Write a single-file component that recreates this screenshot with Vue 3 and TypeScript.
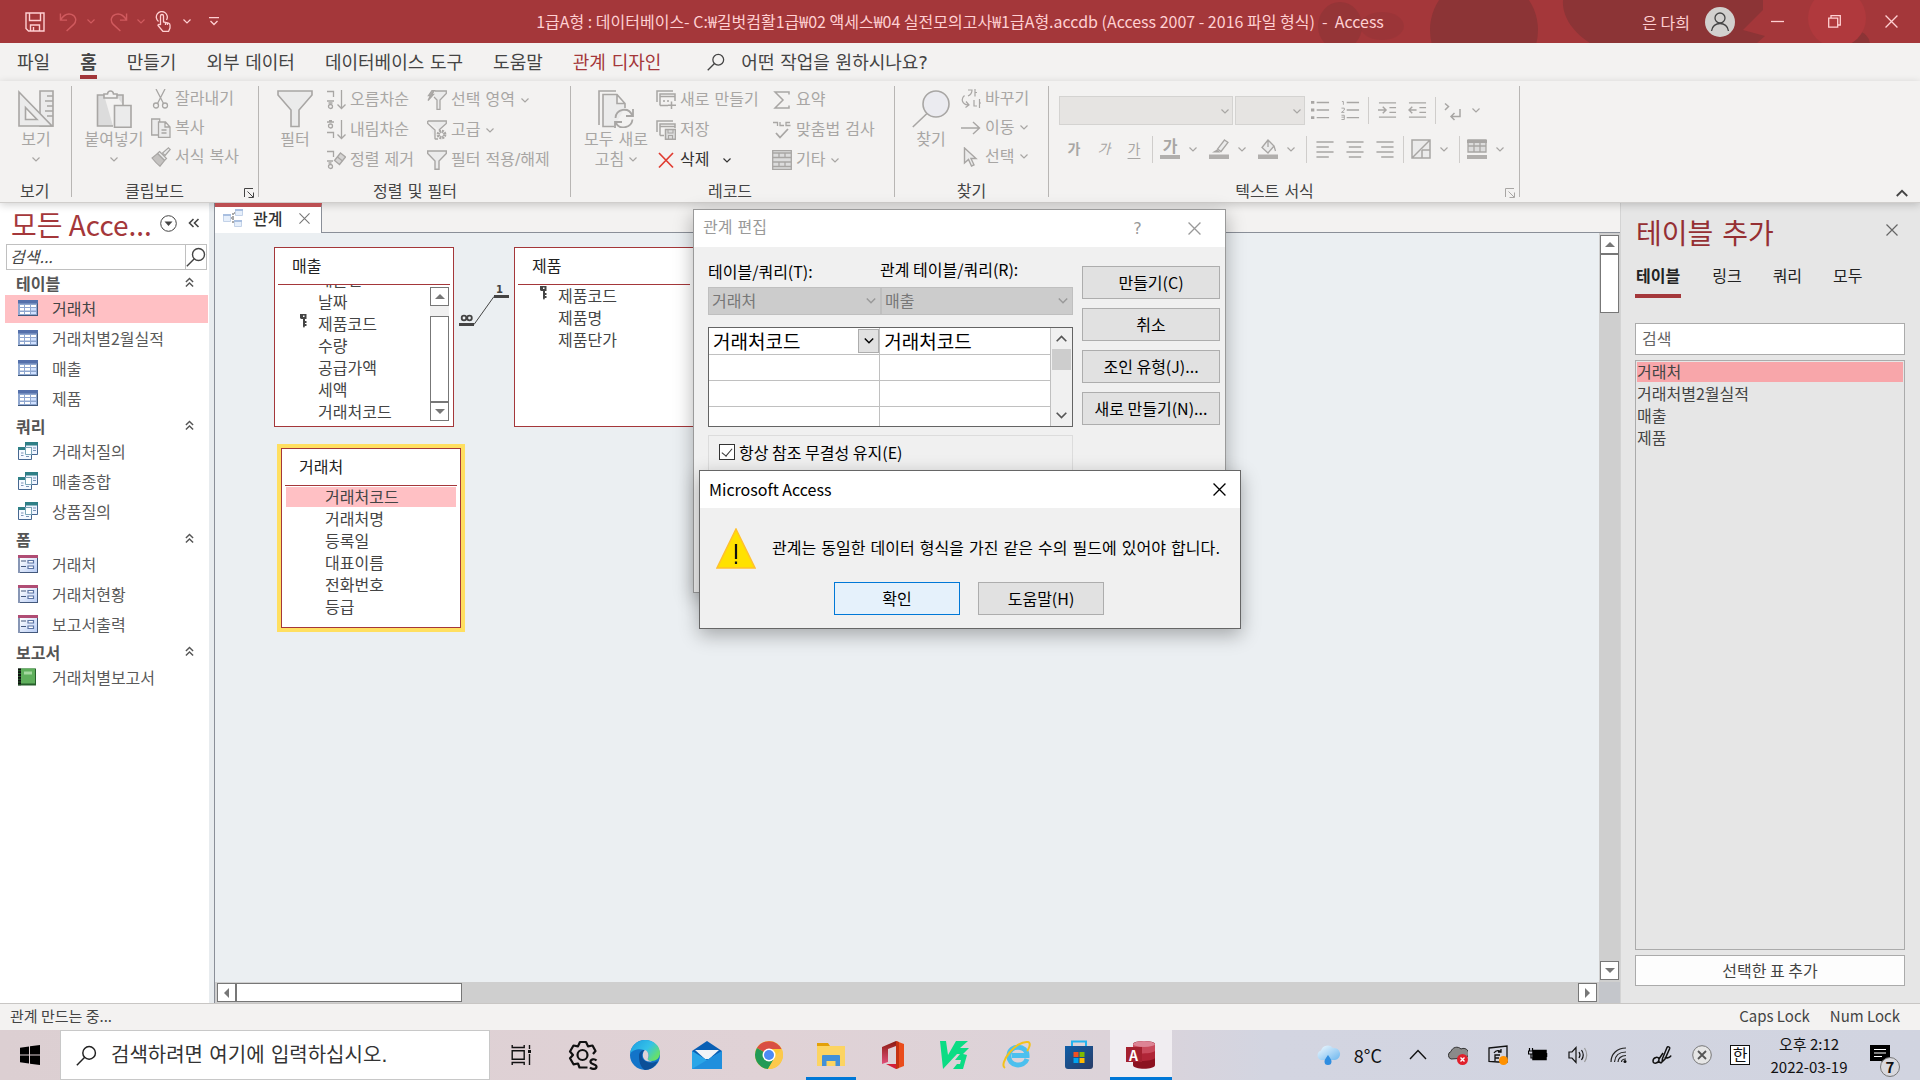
<script setup lang="ts">
import { ref } from 'vue'

interface NavGroup {
  title: string
  icon: string
  items: string[]
}

interface Cmd {
  label: string
  icon: string
  drop?: boolean
  live?: boolean
}

const ribbonTabs = ['파일', '홈', '만들기', '외부 데이터', '데이터베이스 도구', '도움말', '관계 디자인']

const clipboardCmds: Cmd[] = [
  { label: '잘라내기', icon: 'cut' },
  { label: '복사', icon: 'copy' },
  { label: '서식 복사', icon: 'brush' },
]
const sortCmds: Cmd[] = [
  { label: '오름차순', icon: 'asc' },
  { label: '내림차순', icon: 'desc' },
  { label: '정렬 제거', icon: 'unsort' },
]
const filterCmds: Cmd[] = [
  { label: '선택 영역', icon: 'filter-bolt', drop: true },
  { label: '고급', icon: 'filter-gear', drop: true },
  { label: '필터 적용/해제', icon: 'filter-small' },
]
const recordCmds: Cmd[] = [
  { label: '새로 만들기', icon: 'rec-new' },
  { label: '저장', icon: 'rec-save' },
  { label: '삭제', icon: 'rec-delete', drop: true, live: true },
]
const totalCmds: Cmd[] = [
  { label: '요약', icon: 'sigma' },
  { label: '맞춤법 검사', icon: 'spell' },
  { label: '기타', icon: 'more', drop: true },
]
const findCmds: Cmd[] = [
  { label: '바꾸기', icon: 'replace' },
  { label: '이동', icon: 'goto', drop: true },
  { label: '선택', icon: 'cursor', drop: true },
]

const navGroups: NavGroup[] = [
  { title: '테이블', icon: 'nav-table', items: ['거래처', '거래처별2월실적', '매출', '제품'] },
  { title: '쿼리', icon: 'nav-query', items: ['거래처질의', '매출종합', '상품질의'] },
  { title: '폼', icon: 'nav-form', items: ['거래처', '거래처현황', '보고서출력'] },
  { title: '보고서', icon: 'nav-report', items: ['거래처별보고서'] },
]

const salesFields = ['매출번', '날짜', '제품코드', '수량', '공급가액', '세액', '거래처코드']
const productFields = ['제품코드', '제품명', '제품단가']
const clientFields = ['거래처코드', '거래처명', '등록일', '대표이름', '전화번호', '등급']

const addTabs = ['테이블', '링크', '쿼리', '모두']
const addTables = ['거래처', '거래처별2월실적', '매출', '제품']

const enforceIntegrity = ref(true)

const taskApps = ['edge', 'mail', 'chrome', 'explorer', 'office', 'v3', 'ie', 'store', 'access']
const trayIcons = ['chev-up', 'cloud-off', 'sync', 'battery', 'sound', 'wifi', 'pen', 'cancel']
</script>

<template>
  <div class="app">
    <svg class="sprite" aria-hidden="true">
      <defs>
        <linearGradient id="g-edge" x1="0" y1="0" x2="1" y2="0.6"><stop offset="0" stop-color="#1b9de2" /><stop offset="0.6" stop-color="#35c1e8" /><stop offset="1" stop-color="#66e06a" /></linearGradient>
        <linearGradient id="g-form" x1="0" y1="0" x2="1" y2="1"><stop offset="0" stop-color="#fff" /><stop offset="1" stop-color="#b9cdf5" /></linearGradient>
        <linearGradient id="g-off" x1="0" y1="0" x2="0" y2="1"><stop offset="0" stop-color="#8b1a10" /><stop offset="1" stop-color="#e0507a" /></linearGradient>
        <linearGradient id="g-store" x1="0" y1="0" x2="1" y2="1"><stop offset="0" stop-color="#0f5ea8" /><stop offset="1" stop-color="#2a3c66" /></linearGradient>
        <linearGradient id="g-cloud" x1="0" y1="0" x2="1" y2="1"><stop offset="0" stop-color="#f4fbff" /><stop offset="1" stop-color="#6cb6ee" /></linearGradient>
      </defs>
      <symbol id="chev" viewBox="0 0 8 5"><path d="M.5.5 4 4 7.5.5" fill="none" stroke="currentColor" stroke-width="1.2" /></symbol>
      <symbol id="x" viewBox="0 0 12 12"><path d="M.5.5l11 11M11.5.5l-11 11" fill="none" stroke="currentColor" stroke-width="1.2" /></symbol>
      <symbol id="lens" viewBox="0 0 20 20"><g fill="none" stroke="currentColor" stroke-width="1.4"><circle cx="12.5" cy="7.5" r="6" /><path d="M8.3 11.7.8 19.2" /></g></symbol>
      <symbol id="dbl" viewBox="0 0 10 12"><path d="M1 5.5l4-4 4 4M1 10.5l4-4 4 4" fill="none" stroke="currentColor" stroke-width="1.6" /></symbol>
      <symbol id="launch" viewBox="0 0 10 10"><path d="M.5 9V.5H9M3.5 3.5 9 9M9.500 4.500v5h-5" fill="none" stroke="currentColor" /></symbol>
      <symbol id="save" viewBox="0 0 20 20"><g fill="none" stroke="currentColor" stroke-width="1.4"><path d="M1 1h18v18H3.500L1 16.500z" /><path d="M4.500 1v7.500h11V1M5.500 19v-6h9v6M8.500 15v4" /></g></symbol>
      <symbol id="undo" viewBox="0 0 20 20"><path d="M1.500 1v7h7M1.500 8C5 2.500 9 .8 13 2c5 1.500 6 7 2.500 10.500L8 19.500" fill="none" stroke="currentColor" stroke-width="1.5" /></symbol>
      <symbol id="touch" viewBox="0 0 16 21"><g fill="none" stroke="currentColor" stroke-width="1.300"><path d="M3.500 10.500A5.500 5.500 0 1 1 11.500 9" /><path d="M5.500 14V5a1.500 1.500 0 0 1 3 0v6l5 1.200c1.200.3 1.500 1 1.500 2V17l-1.500 3.500H8L3 14.500c0-1.500 1.500-1.500 2.500-.5M10.500 11.500V14M12.500 12v2" /></g></symbol>
      <symbol id="custom" viewBox="0 0 10 9"><path d="M0 .7h10M1.500 4 5 7.500 8.500 4" fill="none" stroke="currentColor" stroke-width="1.300" /></symbol>

      <symbol id="b-view" viewBox="0 0 36 38"><g fill="#ebebeb" stroke="currentColor" stroke-width="1.600"><path d="M22 1h13v35H22zM29 6h6M27 11h8M29 16h6M27 21h8M29 26h6" /><path d="M1 2l33 34H1zM7.500 17.500 19 29.500H7.500z" fill-rule="evenodd" /></g></symbol>
      <symbol id="b-paste" viewBox="0 0 36 38"><g stroke="currentColor" stroke-width="1.600" fill="none"><path d="M8 5H1.500v31H17M20 5h7v10" fill="#dcdcdc" /><path d="M8 8V4h3.500c.5-4 5.500-4 6 0H21v4z" fill="#f3f2f1" /><path d="M18.500 15.500H35V37.200H18.500z" fill="#ebebeb" /></g></symbol>
      <symbol id="b-filter" viewBox="0 0 36 38"><path d="M1 1h34v4L22 20v16.500h-8V20L1 5z" fill="#ebebeb" stroke="currentColor" stroke-width="1.600" /></symbol>
      <symbol id="b-refresh" viewBox="0 0 36 38"><g stroke="currentColor" stroke-width="1.600" fill="none"><path d="M18 1H1v34" /><path d="M16 36.500H5V4.500h14l8 9V18M19 4.500v9h8" fill="#ebebeb" /><path d="M17.500 28c.5-9 13-11.500 16.500-3M35 19v7h-7M34.500 29.500c-1 8.500-13 11-16.500 3.500M17 38v-6h7" stroke-width="1.800" /></g></symbol>
      <symbol id="b-find" viewBox="0 0 38 38"><g stroke="currentColor" stroke-width="1.600" fill="#ebebf0"><circle cx="24" cy="14" r="13" /><path d="M15 23.500.8 37" /></g></symbol>

      <symbol id="cut" viewBox="0 0 20 20"><g fill="none" stroke="currentColor" stroke-width="1.300"><path d="M5 0l7.500 14.500M14 0 6.500 14.500" /><circle cx="5" cy="16.500" r="2.500" /><circle cx="14" cy="16.500" r="2.500" /></g></symbol>
      <symbol id="copy" viewBox="0 0 20 20"><g fill="#ebebeb" stroke="currentColor" stroke-width="1.300"><path d="M.7 1h8v16h-8z" /><path d="M7.500 4h7l4.500 5v10.300H7.500zM14 4v5h5M10.500 12h5M10.500 15h5" /></g></symbol>
      <symbol id="brush" viewBox="0 0 20 20"><g stroke="currentColor" stroke-width="1.200" fill="#ebebeb"><path d="M17.500.8 19.200 2.500 14 8.500 11.500 6z" /><path d="M8.500 4.500l7 7-2 2-7-7z" /><path d="M6.500 6.500l7 7-4.500 5.700C6 17 3 13.500 1 11z" fill="#c4c2c0" /></g></symbol>
      <symbol id="asc" viewBox="0 0 20 20"><g fill="none" stroke="currentColor" stroke-width="1.300"><path d="M1 1.500h6.500V7M1 11h7M2.500 13h4" /><circle cx="4.500" cy="16.500" r="2" /><path d="M15.500 0v18.500M11.500 14.500l4 4 4-4" /></g></symbol>
      <symbol id="desc" viewBox="0 0 20 20"><g fill="none" stroke="currentColor" stroke-width="1.300"><path d="M1 2h7M3 .5h3M1 12.500h6.500V18" /><circle cx="4.500" cy="6" r="2" /><path d="M15.500 0v18.500M11.500 14.500l4 4 4-4" /></g></symbol>
      <symbol id="unsort" viewBox="0 0 20 20"><g fill="none" stroke="currentColor" stroke-width="1.300"><path d="M1 1.500h6.500V7M1 11h6M2.500 13h3" /><circle cx="4.500" cy="16.500" r="2" /><path d="M14.500 3l5 4-6 7.500-5-4z" fill="#d5d4d3" /><path d="M11.500 7l5 4" /></g></symbol>
      <symbol id="filter-bolt" viewBox="0 0 20 20"><g stroke="currentColor" stroke-width="1.300"><path d="M8 1h11.300v2.500L13 10v9.300h-3V10L7 7" fill="#ebebeb" /><path d="M5 .5 1.500 5.500h2L1 10.500l5.500-6h-2L7.500.5z" fill="#b1afad" /></g></symbol>
      <symbol id="filter-gear" viewBox="0 0 20 20"><path d="M.7 1h18.600v2.500L12 10M8 19.300V10L.7 3.500V1M8 19h3" fill="#ebebeb" stroke="currentColor" stroke-width="1.300" /><circle cx="14.500" cy="14.500" r="3.700" fill="none" stroke="currentColor" stroke-width="2.400" stroke-dasharray="2 .9" /><circle cx="14.500" cy="14.500" r="2.200" fill="none" stroke="currentColor" /></symbol>
      <symbol id="filter-small" viewBox="0 0 20 20"><path d="M.7 1h18.600v2.500L12 11v8.300H8V11L.7 3.500z" fill="#ebebeb" stroke="currentColor" stroke-width="1.400" /></symbol>
      <symbol id="rec-new" viewBox="0 0 20 20"><g fill="none" stroke="currentColor" stroke-width="1.500"><path d="M1 12V1h16M4 15.500V4h15v7M4 6.500h15M4 15.500h8M7 11h2M11 11h2M15.500 11.500V19M12 15.300h8" /></g></symbol>
      <symbol id="rec-save" viewBox="0 0 20 20"><g fill="none" stroke="currentColor" stroke-width="1.500"><path d="M1 12V1h16M4 15.500V4h15v4M4 6.500h15M4 15.500h4" /><path d="M9.500 9.500h10v9.700h-10z" fill="#dcdcdc" /><path d="M12 9.500v3.500h5V9.500M12.500 19v-3.500h4V19" stroke-width="1.100" /></g></symbol>
      <symbol id="rec-delete" viewBox="0 0 20 20"><path d="M3 3l14 14.500M17 3 3 17.500" fill="none" stroke="#e03c31" stroke-width="1.700" /></symbol>
      <symbol id="sigma" viewBox="0 0 20 20"><path d="M17 4.500V2H3l8 8-8 8h14v-2.500" fill="none" stroke="currentColor" stroke-width="1.500" /></symbol>
      <symbol id="spell" viewBox="0 0 20 20"><g fill="none" stroke="currentColor" stroke-width="1.300"><path d="M1 2.500h4.500V6M8 2v3.500h4M18 2.500h-4v3h4.500" /><path d="M4 13l4 4.500 8-8.500" stroke-width="1.800" /></g></symbol>
      <symbol id="more" viewBox="0 0 20 20"><g fill="#dcdcdc" stroke="currentColor" stroke-width="1.300"><path d="M.7.7h18.600v18.600H.7z" /><path d="M.7 3h18.600M.7 7.500h18.600M.7 12h18.600M.7 16.500h18.600M7 3v4.500M13 3v4.500M7 12v4.500M13 12v4.500" /></g></symbol>
      <symbol id="replace" viewBox="0 0 20 20"><g fill="none" stroke="currentColor" stroke-width="1.200"><path d="M7 1h4c0 3-1.500 5-4 6M14 0v7.500M14 3.500h2M13 11v6h3M18.500 10v9M18.500 14h1.500" /><path d="M3.500 6.500C-.5 10 1 15 7 16M5 12.500l3 3.500-3.500 2.500" /></g></symbol>
      <symbol id="goto" viewBox="0 0 20 20"><path d="M0 10h18M12 4l6.500 6-6.500 6" fill="none" stroke="currentColor" stroke-width="1.400" /></symbol>
      <symbol id="cursor" viewBox="0 0 20 20"><path d="M3.500 1v15l4-3.500 3 6.500 2.500-1.200-3-6.300H15z" fill="#ebebeb" stroke="currentColor" stroke-width="1.400" /></symbol>

      <symbol id="bullets" viewBox="0 0 20 20"><path d="M0 1.500h3.500M0 9.500h3.500M0 17.500h3.500" stroke="currentColor" stroke-width="3" /><path d="M6 1.500h13M6 9.500h13M6 17.500h13" stroke="currentColor" stroke-width="1.500" /></symbol>
      <symbol id="numbers" viewBox="0 0 20 20"><path d="M1 .5h1.500V4M.5 7.500h3v2l-3 2.500h3M.5 15h3v4.500h-3M.5 17h3" fill="none" stroke="currentColor" /><path d="M6 1.500h13M6 9.500h13M6 17.500h13" stroke="currentColor" stroke-width="1.500" /></symbol>
      <symbol id="indent" viewBox="0 0 20 20"><path d="M1 2h18M12 7h7M12 12h7M1 17h18M0 9.500h8M5 6l3.500 3.500L5 13" fill="none" stroke="currentColor" stroke-width="1.500" /></symbol>
      <symbol id="outdent" viewBox="0 0 20 20"><path d="M1 2h18M12 7h7M12 12h7M1 17h18M1 9.500h8M4.500 6 1 9.500 4.500 13" fill="none" stroke="currentColor" stroke-width="1.500" /></symbol>
      <symbol id="rtl" viewBox="0 0 20 20"><path d="M2 2.500l3.500 3L2 9M17 8v7.500H8M11.500 12 8 15.500l3.500 3.500" fill="none" stroke="currentColor" stroke-width="1.500" /></symbol>
      <symbol id="hilite" viewBox="0 0 20 20"><path d="M15.500 1 19 3.500l-7 9-3.500-2.500z" fill="#ebebeb" stroke="currentColor" stroke-width="1.300" /><path d="M8 10.500l3.500 3H3z" fill="currentColor" /><path d="M0 15.500h20V20H0z" fill="#b1afad" /></symbol>
      <symbol id="bucket" viewBox="0 0 20 20"><path d="M10 1 4 8.500l6 5.500 6-7zM10 1v7M16 7l1.500 5" fill="#ebebeb" stroke="currentColor" stroke-width="1.300" /><path d="M0 15.500h20V20H0z" fill="#b1afad" /></symbol>
      <symbol id="al-l" viewBox="0 0 20 20"><path d="M1 2h18M1 7.300h13M1 12.600h18M1 18h13" stroke="currentColor" stroke-width="1.600" /></symbol>
      <symbol id="al-c" viewBox="0 0 20 20"><path d="M1 2h18M3.500 7.300h13M1 12.600h18M3.500 18h13" stroke="currentColor" stroke-width="1.600" /></symbol>
      <symbol id="al-r" viewBox="0 0 20 20"><path d="M1 2h18M6 7.300h13M1 12.600h18M6 18h13" stroke="currentColor" stroke-width="1.600" /></symbol>
      <symbol id="altrow" viewBox="0 0 20 20"><path d="M1 1h18v18H1zM1 19 19 1M11 11v8M11 11h8" fill="#ebebeb" stroke="currentColor" stroke-width="1.500" /></symbol>
      <symbol id="gridlines" viewBox="0 0 20 20"><path d="M1 1h18v12H1zM7 1v12M13 1v12M1 7h18" fill="#dcdcdc" stroke="currentColor" stroke-width="1.300" /><path d="M0 1h20v3H0z" fill="currentColor" /><path d="M0 16h20v4H0z" fill="#b1afad" /></symbol>

      <symbol id="nav-table" viewBox="0 0 20 16"><path d="M0 0h20v16H0z" fill="#41597d" /><path d="M0 0h19v15H0z" fill="#8ea6cf" /><path d="M0 0h20v3.500H0z" fill="#5470ab" /><path d="M2 5h4v2H2zM7 5h5v2H7zM13 5h5v2h-5zM2 8h4v2.500H2zM7 8h5v2.500H7zM2 12h4v2H2zM7 12h5v2H7z" fill="#fff" /><path d="M13 8h5v2.500h-5zM13 12h5v2h-5z" fill="#cfe0ff" /></symbol>
      <symbol id="nav-query" viewBox="0 0 20 18"><path d="M7.500.5h12v12h-12z" fill="#eef4ff" stroke="#466791" /><path d="M7 0h13v3.500H7z" fill="#2e7f86" /><path d="M15 6h3M15 8.500h3" stroke="#7b92b5" /><path d="M.5 5.500h13v12H.5z" fill="#f4f8ff" stroke="#466791" /><path d="M0 5h7v3H0z" fill="#2e7f86" /><path d="M7.500 5.500h6v7h-6z" fill="#fff" stroke="#7aa6b8" /><path d="M3 11h2.500M3 13.500h2.500M8 14.500h3" stroke="#7b92b5" /></symbol>
      <symbol id="nav-form" viewBox="0 0 20 18"><path d="M0 0h20v18H0z" fill="#43587c" /><path d="M0 0h2v18H0z" fill="#8796b5" /><path d="M2 3h17v14H2z" fill="url(#g-form)" /><path d="M0 0h20v3H0z" fill="#b04d74" /><path d="M3 6h5M3 11.500h5" stroke="#44587c" stroke-width="1.200" /><path d="M10 5.500h5.500v2.500H10zM10 11h5.500v2.500H10z" fill="#fff" stroke="#5c74a4" stroke-width="1.200" /></symbol>
      <symbol id="nav-report" viewBox="0 0 20 17"><path d="M0 0h18v17H0z" fill="#275f2c" /><path d="M3 0h14v15H3z" fill="#5faf5c" /><path d="M6 3h8v3H6z" fill="#a5d8a0" /><path d="M1.500 0v17" stroke="#111" stroke-width="3" stroke-dasharray="1.800 1" /></symbol>
      <symbol id="rel-tab" viewBox="0 0 20 19"><path d="M7 9h3V4h3M10 9v5h2" fill="none" stroke="#555" stroke-dasharray="2 1" /><g stroke="#c3d2e8"><path d="M.5 5.500h7v7h-7zM12.500.5h7v6h-7zM11.500 11.500h7v6h-7z" fill="#e6effb" /></g><path d="M0 5h8v2H0zM12 0h8v2h-8zM11 11h8v2h-8z" fill="#a9bfe0" /></symbol>
      <symbol id="key" viewBox="0 0 7 14"><path d="M0 0h6.500v5H5v2h1.500v2H5v1h1.500v2H5L4 14 3 12.500V5H1L0 4z" fill="#444" /><path d="M3 1.500h1.500V3H3z" fill="#fff" /></symbol>

      <symbol id="win" viewBox="0 0 20 20"><path d="M0 2.800 9 1.500V9.500H0zM10 1.300 20 0v9.500H10zM0 10.500h9v8L0 17.200zM10 10.500h10V20l-10-1.300z" fill="#000" /></symbol>
      <symbol id="taskview" viewBox="0 0 20 20"><path d="M.7 0v2.500h12V0M.7 5.700h12v8.500H.7zM.7 20v-2.500h12V20M18 0v4M18 9v11" fill="none" stroke="#111" stroke-width="1.400" /><path d="M16.500 5h3v3h-3z" fill="#111" /></symbol>
      <symbol id="gear-s" viewBox="0 0 30 30"><g fill="none" stroke="#111" stroke-width="2.200"><path d="M19.500 27.500h-8l-1.500-4-4.500.8-3.500-6L5 15l-3-3.500L5.500 5.500l4.500.8L12 2h6l2 4.300 4.500-.8 3 5.500-2.500 3" stroke-linejoin="round" /><circle cx="14.500" cy="15" r="5" /></g><path d="M28.500 20.500c-2-2.200-6-1.300-6 1.200 0 3 6 2 6 5 0 2.500-4.500 3-6.500.8" fill="none" stroke="#111" stroke-width="2.200" /></symbol>
      <symbol id="edge" viewBox="0 0 30 30"><circle cx="15" cy="15" r="15" fill="#1374c9" /><path d="M0 14C1 5 8 0 15 0c9 0 15 6 15 13 0 5-4 8-8 8-3 0-5-1-4-3 2-3 0-7-4-8C9 8 2 10 0 14z" fill="url(#g-edge)" /><path d="M9 16c0-4 3-6.500 6-6-3 2-4 6-2 9 3 4 9 5 15 2-3 6-8 9-13 9-5-3-6-9-6-14z" fill="#0c4f98" /><path d="M15 10c3 1 4.500 5 3 8-1 2 1 3 4 3-3 1.500-8 0-9-4-.7-3 .5-6 2-7z" fill="#e0d3d7" /></symbol>
      <symbol id="mail" viewBox="0 0 30 30"><path d="M0 11 15 1l15 10v18H0z" fill="#0a5fb4" /><path d="M3 10h24l-10 9h-4z" fill="#f2f4f7" /><path d="M0 11l15 9 15-9v18H0z" fill="#2ba6e8" /><path d="M0 29 30 11v18z" fill="#1c86d8" opacity=".7" /></symbol>
      <symbol id="chrome" viewBox="0 0 30 30"><circle cx="15" cy="15" r="14" fill="#fcc934" /><path d="M15 15 2.900 8A14 14 0 0 1 27.500 9H15z" fill="#d94f43" /><path d="M15 15 2.900 8A14 14 0 0 0 14 29l6.500-11z" fill="#229a56" /><path d="M27.500 9A14 14 0 0 1 14 29l7-12z" fill="#fcc94c" /><circle cx="15" cy="15" r="6.500" fill="#fff" /><circle cx="15" cy="15" r="5" fill="#4c8bf5" /></symbol>
      <symbol id="explorer" viewBox="0 0 30 30"><path d="M1 3h11l2 3v5H1z" fill="#e3a008" /><path d="M1 6h28v20H1z" fill="#fcd462" /><path d="M6 26V16q0-1 1-1h16q1 0 1 1v10h-4.500v-5h-9v5z" fill="#4290d8" /></symbol>
      <symbol id="office" viewBox="0 0 30 30"><path d="M18 1v5l-8 3v13l-6 2V7z" fill="url(#g-off)" /><path d="M18 1l8 3v22l-8 3z" fill="#ea4c1c" /><path d="M8 24h10v5z" fill="#d41f3a" /><path d="M18 1l3 1v26l-3 1z" fill="#c43212" /></symbol>
      <symbol id="v3" viewBox="0 0 30 30"><path d="M0 1h6l2 14L16 1h12l-8 7h9l-6 6 4 1-4 14H13l4-5h3l1-4h-6l5-6h-3L3 29z" fill="#0bdc84" /></symbol>
      <symbol id="ie" viewBox="0 0 30 30"><g fill="none"><path d="M25 19c-3 9-19 8-18-4C8 4 25 5 25 15.500H10" stroke="#4cc0ee" stroke-width="5" /><path d="M3 28C-4 24 14 0 26 2c4 1 0 8-1 9" stroke="#f3c21b" stroke-width="2" /></g></symbol>
      <symbol id="store" viewBox="0 0 30 30"><path d="M8 8V1.500h14V8" fill="none" stroke="#23b3ef" stroke-width="2" /><path d="M1 6h28v20q0 3-3 3H4q-3 0-3-3z" fill="url(#g-store)" /><path d="M9.500 12h5v5h-5z" fill="#f25022" /><path d="M15.500 12h5v5h-5z" fill="#7fba00" /><path d="M9.500 18h5v5h-5z" fill="#00a4ef" /><path d="M15.500 18h5v5h-5z" fill="#ffb900" /></symbol>
      <symbol id="access" viewBox="0 0 30 30"><path d="M7 4c0-4 22-4 22 0v21c0 5-22 5-22 0z" fill="#8c1220" /><path d="M7 4h22v14c-2 3-16 4-22 2z" fill="#b02537" /><path d="M7 4h22v7c-2 2.500-16 3-22 2z" fill="#c94a5c" /><ellipse cx="18" cy="4" rx="11" ry="3" fill="#dd8495" /><path d="M0 7h16v15H0z" fill="#a4202f" /></symbol>

      <symbol id="weather" viewBox="0 0 26 20"><path d="M6 15a5 5 0 0 1 0-9.500A7 7 0 0 1 18 3a6 6 0 0 1 2 12z" fill="url(#g-cloud)" /><path d="M13 10c2 3 3.500 4.500 3.500 6.500a3.500 3.500 0 0 1-7 0C9.500 14.500 11 13 13 10z" fill="#2f8de0" /></symbol>
      <symbol id="chev-up" viewBox="0 0 20 20"><path d="M2 14l8-8.500 8 8.500" fill="none" stroke="#111" stroke-width="1.400" /></symbol>
      <symbol id="cloud-off" viewBox="0 0 20 20"><path d="M3 14a4 4 0 0 1 0-7.500A6 6 0 0 1 13 4a5 5 0 0 1 5 9z" fill="#8a8a8a" stroke="#333" /><circle cx="14.500" cy="14.500" r="5.500" fill="#e0202c" /><path d="M12.500 12.500l4 4M16.500 12.500l-4 4" stroke="#fff" stroke-width="1.400" /></symbol>
      <symbol id="sync" viewBox="0 0 20 20"><path d="M1 3l18-2v16H10L1 16.500zM6 8c2-3 6-3 7-1M13 4v3h-3M12 10H7v3h4M7 13v3" fill="none" stroke="#111" stroke-width="1.300" /><circle cx="15.500" cy="15.500" r="4.500" fill="#ff9100" /></symbol>
      <symbol id="battery" viewBox="0 0 20 20"><path d="M5 5.500h13v9H5zM18.500 8v4" fill="#000" stroke="#000" stroke-width="1.500" /><path d="M1.500 3v3M4.500 3v3M.5 6h5v3h-5zM3 9v4h2" fill="none" stroke="#000" stroke-width="1.200" /></symbol>
      <symbol id="sound" viewBox="0 0 20 20"><path d="M1 7h3l4-4.500v15L4 13H1z" fill="none" stroke="#111" stroke-width="1.200" /><path d="M11 7q2 3 0 6M13.500 5q3.500 5 0 10" fill="none" stroke="#111" stroke-width="1.200" /><path d="M16.500 3q4.500 7 0 14" fill="none" stroke="#999" stroke-width="1.200" /></symbol>
      <symbol id="wifi" viewBox="0 0 20 20"><path d="M3 17C3 9 9 3 18 3M6.500 17C7 11 11 7 18 7M10 17c0-3.500 3-6.500 8-6.500M13.500 17c0-2 2-3 4.500-3" fill="none" stroke="#222" stroke-width="1.200" /><circle cx="17" cy="16.500" r="1.500" fill="#111" /></symbol>
      <symbol id="pen" viewBox="0 0 20 20"><path d="M10.500 13.500 15 2.500c.6-1.500 3.200-.6 2.700 1L13 14l-3 3zM1 16c0-4 6-5 6-1.500 0 4-6 5-6 1.500M7 14l4-6M12.500 13c3 0 6-.5 6.500-2.500M6.500 16.500 9 18" fill="none" stroke="#111" stroke-width="1.500" /></symbol>
      <symbol id="cancel" viewBox="0 0 20 20"><circle cx="10" cy="10" r="9.300" fill="#e6e6e6" stroke="#777" /><path d="M6 6l8 8M14 6l-8 8" stroke="#555" stroke-width="1.800" /></symbol>
      <symbol id="note" viewBox="0 0 20 20"><path d="M0 0h20v16h-4v4l-5-4H0z" fill="#000" /><path d="M4 4.500h12M4 8h12M4 11.500h8" stroke="#fff" stroke-width="1.200" /></symbol>
    </svg>

    <header class="titlebar">
      <svg class="titleart" viewBox="0 0 620 43" preserveAspectRatio="xMaxYMid slice" aria-hidden="true">
        <g fill="#8c3436"><ellipse cx="40" cy="26" rx="22" ry="24" opacity=".6" /><ellipse cx="82" cy="26" rx="22" ry="14" opacity=".35" /><circle cx="184" cy="30" r="54" /><path d="M263 0h200v10l-20 20 22 6-8 7H290C270 30 262 14 263 0z" /><circle cx="556" cy="45" r="14" /></g>
        <circle cx="537" cy="18" r="29" fill="#b0393d" />
      </svg>
      <div class="qat">
        <button aria-label="저장"><svg width="20" height="20"><use href="#save" /></svg></button>
        <button class="dim" aria-label="실행 취소"><svg width="19" height="20"><use href="#undo" /></svg><svg width="8" height="5"><use href="#chev" /></svg></button>
        <button class="dim" aria-label="다시 실행"><svg class="flip" width="19" height="20"><use href="#undo" /></svg><svg width="8" height="5"><use href="#chev" /></svg></button>
        <button class="touch" aria-label="터치/마우스 모드"><svg width="16" height="21"><use href="#touch" /></svg><svg width="8" height="5"><use href="#chev" /></svg></button>
        <button aria-label="사용자 지정"><svg width="10" height="9"><use href="#custom" /></svg></button>
      </div>
      <h1>1급A형 : 데이터베이스- C:₩길벗컴활1급₩02 액세스₩04 실전모의고사₩1급A형.accdb (Access 2007 - 2016 파일 형식)&nbsp; -&nbsp; Access</h1>
      <div class="account">
        <span>은 다희</span>
        <svg width="30" height="30" viewBox="0 0 30 30"><circle cx="15" cy="15" r="15" fill="#d2d0ce" /><g fill="none" stroke="#444" stroke-width="1.300"><circle cx="15" cy="11" r="5" /><path d="M6.500 24c1-10 16-10 17 0" /></g></svg>
        <button aria-label="최소화"><svg width="13" height="13" viewBox="0 0 13 13"><path d="M0 6.500h13" stroke="currentColor" stroke-width="1.300" /></svg></button>
        <button aria-label="이전 크기로"><svg width="13" height="13" viewBox="0 0 13 13"><path d="M.7 3.200h9v9h-9zM3 3V.7h9.300V10H10" fill="none" stroke="currentColor" stroke-width="1.300" /></svg></button>
        <button aria-label="닫기"><svg width="13" height="13"><use href="#x" /></svg></button>
      </div>
    </header>

    <nav class="tabs">
      <button v-for="t in ribbonTabs" :key="t" :class="{ on: t === '홈', ctx: t === '관계 디자인' }">{{ t }}</button>
      <label class="tell"><svg width="18" height="18"><use href="#lens" /></svg><input value="어떤 작업을 원하시나요?" aria-label="작업 검색" /></label>
    </nav>

    <section class="ribbon">
      <div class="group g-view">
        <div class="cmds">
          <button class="big"><svg width="36" height="38"><use href="#b-view" /></svg><span>보기</span><svg width="8" height="5" class="under"><use href="#chev" /></svg></button>
        </div>
        <p>보기</p>
      </div>
      <div class="group g-clip">
        <div class="cmds">
          <button class="big"><svg width="36" height="38"><use href="#b-paste" /></svg><span>붙여넣기</span><svg width="8" height="5" class="under"><use href="#chev" /></svg></button>
          <div class="col tight">
            <button v-for="c in clipboardCmds" :key="c.icon"><svg width="20" height="20"><use :href="'#' + c.icon" /></svg>{{ c.label }}</button>
          </div>
        </div>
        <p>클립보드</p>
        <button class="launcher dark" aria-label="클립보드 창"><svg width="10" height="10"><use href="#launch" /></svg></button>
      </div>
      <div class="group g-sort">
        <div class="cmds">
          <button class="big"><svg width="36" height="38"><use href="#b-filter" /></svg><span>필터</span></button>
          <div class="col c-sort">
            <button v-for="c in sortCmds" :key="c.icon"><svg width="20" height="20"><use :href="'#' + c.icon" /></svg>{{ c.label }}</button>
          </div>
          <div class="col">
            <button v-for="c in filterCmds" :key="c.icon"><svg width="20" height="20"><use :href="'#' + c.icon" /></svg>{{ c.label }}<svg v-if="c.drop" class="drop" width="8" height="5"><use href="#chev" /></svg></button>
          </div>
        </div>
        <p>정렬 및 필터</p>
      </div>
      <div class="group g-rec">
        <div class="cmds">
          <button class="big"><svg width="36" height="38"><use href="#b-refresh" /></svg><span>모두 새로</span><span class="two">고침 <svg width="8" height="5"><use href="#chev" /></svg></span></button>
          <div class="col c-rec">
            <button v-for="c in recordCmds" :key="c.icon" :class="{ live: c.live }"><svg width="20" height="20"><use :href="'#' + c.icon" /></svg>{{ c.label }}<svg v-if="c.drop" class="drop" width="8" height="5"><use href="#chev" /></svg></button>
          </div>
          <div class="col">
            <button v-for="c in totalCmds" :key="c.icon"><svg width="20" height="20"><use :href="'#' + c.icon" /></svg>{{ c.label }}<svg v-if="c.drop" class="drop" width="8" height="5"><use href="#chev" /></svg></button>
          </div>
        </div>
        <p>레코드</p>
      </div>
      <div class="group g-find">
        <div class="cmds">
          <button class="big"><svg width="38" height="38"><use href="#b-find" /></svg><span>찾기</span></button>
          <div class="col tight">
            <button v-for="c in findCmds" :key="c.icon"><svg width="20" height="20"><use :href="'#' + c.icon" /></svg>{{ c.label }}<svg v-if="c.drop" class="drop" width="8" height="5"><use href="#chev" /></svg></button>
          </div>
        </div>
        <p>찾기</p>
      </div>
      <div class="group g-text">
        <div class="fmt">
          <div class="row r1">
            <span class="combo font"><select disabled aria-label="글꼴"></select><svg width="8" height="5"><use href="#chev" /></svg></span>
            <span class="combo size"><select disabled aria-label="글꼴 크기"></select><svg width="8" height="5"><use href="#chev" /></svg></span>
            <button aria-label="글머리 기호"><svg width="19" height="19"><use href="#bullets" /></svg></button>
            <button aria-label="번호 매기기"><svg width="19" height="19"><use href="#numbers" /></svg></button>
            <i></i>
            <button aria-label="들여쓰기"><svg width="19" height="19"><use href="#indent" /></svg></button>
            <button aria-label="내어쓰기"><svg width="19" height="19"><use href="#outdent" /></svg></button>
            <i></i>
            <button class="split" aria-label="텍스트 방향"><svg width="20" height="20"><use href="#rtl" /></svg><svg width="8" height="5"><use href="#chev" /></svg></button>
          </div>
          <div class="row r2">
            <button class="ga"><b>가</b></button>
            <button class="ga"><em>가</em></button>
            <button class="ga"><u>가</u></button>
            <i></i>
            <button class="split"><span class="color">가</span><svg width="8" height="5"><use href="#chev" /></svg></button>
            <button class="split" aria-label="강조 색"><svg width="20" height="20"><use href="#hilite" /></svg><svg width="8" height="5"><use href="#chev" /></svg></button>
            <button class="split" aria-label="배경색"><svg width="20" height="20"><use href="#bucket" /></svg><svg width="8" height="5"><use href="#chev" /></svg></button>
            <i></i>
            <button aria-label="왼쪽 맞춤"><svg width="20" height="19"><use href="#al-l" /></svg></button>
            <button aria-label="가운데 맞춤"><svg width="20" height="19"><use href="#al-c" /></svg></button>
            <button aria-label="오른쪽 맞춤"><svg width="20" height="19"><use href="#al-r" /></svg></button>
            <i></i>
            <button class="split" aria-label="대체 행 색"><svg width="20" height="20"><use href="#altrow" /></svg><svg width="8" height="5"><use href="#chev" /></svg></button>
            <i></i>
            <button class="split" aria-label="눈금선"><svg width="20" height="20"><use href="#gridlines" /></svg><svg width="8" height="5"><use href="#chev" /></svg></button>
          </div>
        </div>
        <p>텍스트 서식</p>
        <button class="launcher" aria-label="텍스트 서식 창"><svg width="10" height="10"><use href="#launch" /></svg></button>
      </div>
      <button class="collapse" aria-label="리본 축소"><svg class="up" width="12" height="8"><use href="#chev" /></svg></button>
    </section>

    <main class="work">
      <aside class="nav">
        <div class="navhead">
          <h2>모든 Acce...</h2>
          <button aria-label="범주"><svg width="17" height="17" viewBox="0 0 17 17"><circle cx="8.500" cy="8.500" r="7.800" fill="none" stroke="#444" /><path d="M4.500 6.500h8l-4 4.500z" fill="#444" /></svg></button>
          <button aria-label="접기"><svg class="ccw" width="10" height="12"><use href="#dbl" /></svg></button>
        </div>
        <div class="navsearch"><input placeholder="검색..." aria-label="검색" /><button aria-label="찾기"><svg width="20" height="20"><use href="#lens" /></svg></button></div>
        <div v-for="(g, gi) in navGroups" :key="g.title">
          <h3>{{ g.title }}<svg width="9" height="11"><use href="#dbl" /></svg></h3>
          <ul>
            <li v-for="(it, i) in g.items" :key="it" :class="{ sel: gi === 0 && i === 0 }"><svg width="20" height="18"><use :href="'#' + g.icon" /></svg>{{ it }}</li>
          </ul>
        </div>
      </aside>

      <section class="doc">
        <div class="strip">
          <div class="doctab"><svg width="20" height="19"><use href="#rel-tab" /></svg><span>관계</span><button aria-label="닫기"><svg width="11" height="11"><use href="#x" /></svg></button></div>
        </div>
        <div class="canvas">
          <div class="tbl sales">
            <h4>매출</h4>
            <div class="list">
              <ul class="scrolled">
                <li v-for="f in salesFields" :key="f"><svg v-if="f === '제품코드'" width="7" height="14"><use href="#key" /></svg>{{ f }}</li>
              </ul>
              <div class="mini"><span class="ar"><b class="tri u"></b></span><span class="thumb"></span><span class="ar"><b class="tri d"></b></span></div>
            </div>
          </div>
          <div class="tbl product">
            <h4>제품</h4>
            <div class="list"><ul>
              <li v-for="f in productFields" :key="f"><svg v-if="f === '제품코드'" width="7" height="14"><use href="#key" /></svg>{{ f }}</li>
            </ul></div>
          </div>
          <div class="tbl client">
            <h4>거래처</h4>
            <div class="list"><ul>
              <li v-for="(f, i) in clientFields" :key="f" :class="{ sel: i === 0 }">{{ f }}</li>
            </ul></div>
          </div>
          <svg class="link" width="56" height="44" viewBox="0 0 56 44">
            <path d="M1 39.500h15M36 11.500h15" stroke="#444" stroke-width="3" />
            <path d="M16 39.500l20-28" stroke="#444" />
            <g fill="none" stroke="#444" stroke-width="1.800"><circle cx="6" cy="33" r="2.300" /><circle cx="11.500" cy="33" r="2.300" /></g>
            <text x="38" y="8">1</text>
          </svg>
        </div>
        <div class="vbar"><span class="ar"><b class="tri u"></b></span><span class="thumb"></span><span class="gap"></span><span class="ar"><b class="tri d"></b></span></div>
        <div class="hbar"><span class="ar"><b class="tri l"></b></span><span class="thumb"></span><span class="gap"></span><span class="ar"><b class="tri r"></b></span></div>
        <div class="corner"></div>
      </section>

      <aside class="add">
        <div class="addhead"><h2>테이블 추가</h2><button aria-label="닫기"><svg width="12" height="12"><use href="#x" /></svg></button></div>
        <div class="addtabs"><button v-for="t in addTabs" :key="t" :class="{ on: t === '테이블' }">{{ t }}</button></div>
        <input placeholder="검색" aria-label="테이블 검색" />
        <ul><li v-for="(t, i) in addTables" :key="t" :class="{ sel: i === 0 }">{{ t }}</li></ul>
        <button class="addbtn">선택한 표 추가</button>
      </aside>
    </main>

    <div class="status"><span>관계 만드는 중...</span><span class="keys">Caps Lock</span><span>Num Lock</span></div>

    <footer class="taskbar">
      <button class="start" aria-label="시작"><svg width="20" height="20"><use href="#win" /></svg></button>
      <label class="tasksearch"><svg width="21" height="21"><use href="#lens" /></svg><input placeholder="검색하려면 여기에 입력하십시오." aria-label="Windows 검색" /></label>
      <button class="app-btn" aria-label="작업 보기"><svg width="21" height="20"><use href="#taskview" /></svg></button>
      <button class="app-btn" aria-label="설정"><svg width="30" height="30"><use href="#gear-s" /></svg></button>
      <button v-for="a in taskApps" :key="a" class="app-btn" :class="a" :aria-label="a">
        <svg width="30" height="30"><use :href="'#' + a" /></svg><span v-if="a === 'access'" class="letter">A</span>
      </button>
      <div class="tray">
        <svg width="26" height="20"><use href="#weather" /></svg><span class="temp">8°C</span>
        <svg v-for="t in trayIcons" :key="t" class="ti" :class="t" width="20" height="20"><use :href="'#' + t" /></svg>
        <span class="ime">한</span>
        <time>오후 2:12<br />2022-03-19</time>
        <span class="notes"><svg width="20" height="20"><use href="#note" /></svg><b>7</b></span>
      </div>
    </footer>

    <div class="dialog edit" role="dialog" aria-label="관계 편집">
      <div class="dhead"><span>관계 편집</span><button class="q">?</button><button aria-label="닫기"><svg width="13" height="13"><use href="#x" /></svg></button></div>
      <div class="dbody">
        <div class="form">
          <div class="pair labels"><label for="tq">테이블/쿼리(T):</label><label for="rq" class="second">관계 테이블/쿼리(R):</label></div>
          <div class="pair">
            <span class="combo2"><select id="tq" disabled><option>거래처</option></select><svg width="10" height="6"><use href="#chev" /></svg></span>
            <span class="combo2 wide"><select id="rq" disabled><option>매출</option></select><svg width="10" height="6"><use href="#chev" /></svg></span>
          </div>
          <div class="fields">
            <table>
              <tbody>
                <tr><td><span class="cell">거래처코드<button aria-label="필드 선택"><svg width="10" height="6"><use href="#chev" /></svg></button></span></td><td>거래처코드</td></tr>
                <tr v-for="n in 3" :key="n"><td></td><td></td></tr>
              </tbody>
            </table>
            <div class="sbar"><svg class="up" width="11" height="7"><use href="#chev" /></svg><span></span><svg width="11" height="7"><use href="#chev" /></svg></div>
          </div>
          <div class="opts"><label><input v-model="enforceIntegrity" type="checkbox" />항상 참조 무결성 유지(E)</label></div>
        </div>
        <div class="btns"><button>만들기(C)</button><button>취소</button><button>조인 유형(J)...</button><button>새로 만들기(N)...</button></div>
      </div>
    </div>

    <div class="dialog msg" role="alertdialog" aria-label="Microsoft Access">
      <div class="dhead"><span>Microsoft Access</span><button aria-label="닫기"><svg width="13" height="13"><use href="#x" /></svg></button></div>
      <div class="warn">
        <svg width="40" height="41" viewBox="0 0 40 41"><path d="M20 1 39 40H1z" fill="#ffe100" stroke="#ffc02e" stroke-width="1.500" /><path d="M20 16v15M20 33.500v2.500" stroke="#111" stroke-width="2.200" /></svg>
        <span>관계는 동일한 데이터 형식을 가진 같은 수의 필드에 있어야 합니다.</span>
      </div>
      <div class="mbtns"><button class="def">확인</button><button>도움말(H)</button></div>
    </div>
  </div>
</template>

<style>
body {
  margin: 0;
}
</style>

<style scoped>
.app {
  --ui: "Noto Sans CJK KR", sans-serif;
  --ko: "DejaVu Sans", "Noto Sans CJK KR", sans-serif;
  position: relative;
  display: flex;
  flex-direction: column;
  min-height: 100vh;
  overflow: hidden;
  font: 16px/20px var(--ui);
  color: #444;
  background: #f3f2f1;
}
.app * {
  box-sizing: border-box;
}
.sprite {
  position: absolute;
  width: 0;
  height: 0;
}
button {
  padding: 0;
  border: 0;
  background: none;
  font: inherit;
  color: inherit;
}
input,
select {
  font: inherit;
  color: inherit;
}
ul {
  margin: 0;
  padding: 0;
  list-style: none;
}
h1,
h2,
h3,
h4,
p {
  margin: 0;
  font-weight: 400;
}
svg {
  flex: none;
}
.up {
  transform: rotate(180deg);
}
.flip {
  transform: scaleX(-1);
}
.ccw {
  transform: rotate(-90deg);
}

/* title bar */
.titlebar {
  position: relative;
  display: grid;
  grid-template-columns: 1fr auto 1fr;
  align-items: center;
  height: 43px;
  background: #a4373a;
  color: #ffd0d2;
}
.titleart {
  position: absolute;
  right: 0;
  top: 0;
  width: 620px;
  height: 43px;
}
.titlebar > :not(.titleart) {
  position: relative;
}
.titlebar h1 {
  padding-bottom: 2px;
  font-size: 16px;
  white-space: nowrap;
}
.qat {
  display: flex;
  align-items: center;
  gap: 14px;
  padding-left: 25px;
}
.qat button {
  display: flex;
  align-items: center;
  gap: 9px;
}
.qat .dim {
  color: #d05a5e;
}
.qat .touch {
  margin-left: -4px;
  gap: 12px;
}
.qat button:last-child {
  margin-left: 4px;
}
.account {
  display: flex;
  align-items: center;
  justify-content: flex-end;
}
.account > svg {
  margin: 0 14px 0 15px;
}
.account button {
  display: grid;
  place-items: center;
  width: 57px;
  height: 43px;
}

/* ribbon tabs */
.tabs {
  display: flex;
  gap: 30px;
  height: 38px;
  padding-left: 17px;
  font: 18px/40px var(--ko);
}
.tabs button {
  position: relative;
}
.tabs .on {
  font-weight: 700;
}
.tabs .on::after {
  content: "";
  position: absolute;
  inset: auto 0 2px;
  height: 4px;
  background: #a4373a;
}
.tabs .ctx {
  color: #a4373a;
}
.tell {
  display: flex;
  align-items: center;
  gap: 16px;
  margin-left: 16px;
}
.tell input {
  width: 240px;
  padding: 2px 0 0;
  border: 0;
  background: none;
}

/* ribbon */
.ribbon {
  position: relative;
  z-index: 1;
  display: flex;
  height: 122px;
  border-bottom: 1px solid #d0cecc;
  background: #f3f2f1;
  box-shadow: 0 2px 8px rgba(0, 0, 0, 0.18);
  font-family: var(--ko);
  color: #a8a6a4;
}
.group {
  position: relative;
  display: flex;
  flex-direction: column;
  flex: none;
}
.group::after {
  content: "";
  position: absolute;
  inset: 5px 0 5px auto;
  width: 1px;
  background: #b8b6b4;
}
.group p {
  color: #444;
  text-align: center;
}
.cmds {
  display: flex;
  flex: 1;
}
.big {
  display: flex;
  flex-direction: column;
  align-items: center;
  align-self: flex-start;
  padding-top: 9px;
  white-space: nowrap;
}
.big span {
  margin-top: 2px;
}
.big .two {
  margin-top: 0;
}
.big .under {
  margin-top: 7px;
}
.big .two svg {
  vertical-align: 3px;
}
.col {
  display: flex;
  flex-direction: column;
  padding-top: 4px;
}
.col button {
  display: flex;
  align-items: center;
  gap: 4px;
  height: 30px;
  white-space: nowrap;
}
.drop {
  margin-left: 2px;
}
.col .live {
  color: #333;
}
.col .live .drop {
  margin-left: 10px;
}
.tight {
  padding-top: 3px;
}
.tight button {
  height: 29px;
}
.g-view {
  width: 72px;
  padding-left: 18px;
}
.g-view p {
  padding-left: 2px;
  text-align: left;
}
.g-view .big {
  width: 36px;
}
.g-clip {
  width: 187px;
  padding-left: 8px;
}
.g-clip .big {
  width: 68px;
}
.g-clip .col {
  margin-left: 3px;
}
.g-clip p,
.g-text p {
  margin-left: -8px;
  padding-right: 22px;
}
.g-sort p,
.g-rec p,
.g-find p {
  margin-left: -18px;
}
.g-sort {
  width: 312px;
  padding-left: 18px;
}
.g-sort .big {
  width: 36px;
}
.c-sort {
  width: 101px;
  margin-left: 13px;
}
.g-rec {
  width: 324px;
  padding-left: 12px;
}
.g-rec .big {
  width: 66px;
}
.c-rec {
  width: 116px;
  margin-left: 7px;
}
.g-find {
  width: 154px;
  padding-left: 17px;
}
.g-find .big {
  width: 38px;
}
.g-find .col {
  margin-left: 11px;
}
.g-text {
  width: 471px;
  padding-left: 10px;
}
.launcher {
  position: absolute;
  right: 5px;
  bottom: 4px;
  display: flex;
}
.launcher.dark {
  color: #444;
}
.fmt {
  flex: 1;
  padding-top: 15px;
}
.row {
  display: flex;
  align-items: center;
}
.r1 {
  height: 29px;
}
.r2 {
  height: 48px;
}
.row i {
  width: 1px;
  height: 27px;
  margin: 0 3px;
  background: #cfcdcb;
}
.row button {
  display: flex;
  align-items: center;
  justify-content: center;
  width: 30px;
}
.row .split {
  justify-content: flex-start;
  width: 49px;
  padding-left: 4px;
  gap: 9px;
}
.combo {
  position: relative;
  height: 29px;
}
.combo select {
  width: 100%;
  height: 100%;
  border: 1px solid #c8c6c4;
  border-radius: 0;
  background: #e1dfdd;
  appearance: none;
}
.combo svg {
  position: absolute;
  right: 4px;
  top: 13px;
}
.font {
  width: 174px;
  margin-right: 2px;
}
.size {
  width: 70px;
}
.ga b,
.ga em,
.ga u {
  font-size: 14px;
}
.ga u {
  text-underline-offset: 4px;
}
.color {
  width: 20px;
  font-weight: 700;
  line-height: 16px;
  border-bottom: 4px solid #b1afad;
}
.collapse {
  display: flex;
  margin: auto 12px 5px auto;
  color: #444;
}

/* work area */
.work {
  display: flex;
  flex: 1;
  min-height: 0;
}
.nav {
  width: 215px;
  flex: none;
  border-right: 1px solid #8a8f98;
  background: linear-gradient(90deg, #fff 209px, #e8ecef 209px);
}
.navhead {
  display: flex;
  align-items: center;
  gap: 12px;
  height: 41px;
  padding: 1px 0 0 11px;
}
.navhead h2 {
  width: 137px;
  font-size: 28px;
  line-height: 38px;
  color: #a4373a;
  white-space: nowrap;
}
.navhead button {
  display: flex;
  margin-top: -2px;
}
.navsearch {
  display: flex;
  width: 201px;
  height: 26px;
  margin: 0 0 2px 6px;
  border: 1px solid #c0c0c0;
  background: #fff;
}
.navsearch input {
  flex: 1;
  min-width: 0;
  padding: 0 3px 2px;
  border: 0;
  font-style: italic;
}
.navsearch input::placeholder {
  color: #444;
}
.navsearch button {
  display: flex;
  padding-top: 2px;
  border-left: 1px solid #c0c0c0;
}
.nav h3 {
  display: flex;
  align-items: center;
  justify-content: space-between;
  height: 23px;
  padding: 0 20px 2px 16px;
  font-size: 16px;
  font-weight: 700;
  color: #555;
}
.nav li {
  display: flex;
  align-items: center;
  gap: 14px;
  height: 28px;
  width: 203px;
  margin: 0 0 2px 5px;
  padding: 0 0 2px 13px;
  color: #5a5a5a;
}
.nav .sel {
  background: #ffc0c4;
  color: #444;
}

/* document */
.doc {
  flex: 1;
  min-width: 0;
  display: grid;
  grid-template: 30px 1fr 21px / 1fr 21px;
}
.strip {
  grid-column: 1 / 3;
  border-bottom: 1px solid #8a8f98;
}
.doctab {
  position: relative;
  z-index: 2;
  display: flex;
  align-items: center;
  width: 107px;
  height: 30px;
  padding: 0 0 3px 8px;
  border-top: 4px solid #bc4f52;
  border-right: 1px solid #8a8f98;
  background: #fff;
  color: #333;
  font-weight: 500;
}
.doctab span {
  margin: 0 17px 2px 10px;
}
.doctab button {
  display: flex;
  color: #777;
}
.canvas {
  position: relative;
  overflow: hidden;
  background: #ebeff2;
}
.tbl {
  position: absolute;
  display: flex;
  flex-direction: column;
  width: 180px;
  height: 180px;
  padding: 0 3px 5px;
  border: 1px solid #a4373a;
  background: #fff;
}
.tbl h4 {
  height: 37px;
  padding-left: 14px;
  border-bottom: 1px solid #a4373a;
  line-height: 34px;
  color: #222;
}
.list {
  position: relative;
  flex: 1;
  overflow: hidden;
}
.tbl li {
  position: relative;
  height: 22px;
  padding-left: 40px;
  line-height: 20px;
}
.tbl li svg {
  position: absolute;
  left: 22px;
  top: 1px;
}
.tbl .sel {
  background: linear-gradient(#ffc0c4, #ffc0c4) 1px 1px / calc(100% - 2px) 20px no-repeat;
}
.scrolled {
  margin-top: -16px;
}
.sales {
  left: 59px;
  top: 14px;
}
.product {
  left: 299px;
  top: 14px;
}
.client {
  left: 66px;
  top: 215px;
  box-shadow: 0 0 0 4px #ffdf60;
}
.link {
  position: absolute;
  left: 243px;
  top: 52px;
}
.link text {
  font: 700 10px "DejaVu Sans", sans-serif;
  fill: #444;
}
.mini {
  position: absolute;
  right: 1px;
  top: 2px;
  bottom: 0;
  display: flex;
  flex-direction: column;
  width: 19px;
  background: #f0f0f0;
}
.ar {
  display: grid;
  place-items: center;
  width: 19px;
  height: 19px;
  flex: none;
  border: 1px solid #777;
  background: #fff;
}
.tri {
  border: 5px solid transparent;
}
.u {
  border-bottom-color: #777;
  border-top: 0;
}
.d {
  border-top-color: #777;
  border-bottom: 0;
}
.l {
  border-right-color: #777;
  border-left: 0;
}
.r {
  border-left-color: #777;
  border-right: 0;
}
.thumb {
  border: 1px solid #777;
  background: #fff;
}
.mini .thumb {
  flex: 1;
  margin-top: 10px;
}
.vbar,
.hbar {
  display: flex;
  background: #cfcfcf;
}
.vbar {
  flex-direction: column;
  align-items: center;
  padding: 2px 0;
}
.vbar .thumb {
  width: 19px;
  height: 59px;
}
.hbar {
  align-items: center;
  padding: 0 2px;
}
.hbar .thumb {
  width: 226px;
  height: 19px;
}
.gap {
  flex: 1;
}
.corner {
  background: #c4c6cb;
}

/* add-tables pane */
.add {
  display: flex;
  flex-direction: column;
  width: 300px;
  flex: none;
  padding: 12px 15px 17px 14px;
  border-left: 1px solid #d4d4d4;
  background: #e6e6e6;
}
.addhead {
  display: flex;
  justify-content: space-between;
  padding: 0 7px 0 1px;
}
.addhead h2 {
  font: 28px/40px var(--ko);
  color: #952f33;
}
.addhead button {
  display: flex;
  margin-top: 9px;
  color: #666;
}
.addtabs {
  display: flex;
  gap: 31px;
  height: 68px;
  padding-top: 7px;
}
.addtabs button {
  height: 36px;
  padding-bottom: 11px;
  color: #222;
}
.addtabs .on {
  padding: 0 1px 7px;
  border-bottom: 4px solid #a4373a;
  font-weight: 700;
}
.add > input {
  height: 32px;
  width: 100%;
  padding: 0 6px 2px;
  border: 1px solid #ababab;
  background: #fff;
}
.add ul {
  flex: 1;
  margin: 5px 0;
  padding: 1px;
  border: 1px solid #ababab;
}
.add li {
  height: 20px;
  margin-bottom: 2px;
  line-height: 18px;
}
.add .sel {
  background: #f8a6aa;
}
.addbtn {
  height: 31px;
  padding-bottom: 2px;
  border: 1px solid #ababab;
  background: #fdfdfd;
}

/* status bar */
.status {
  display: flex;
  gap: 20px;
  height: 27px;
  padding: 0 20px 0 10px;
  border-top: 1px solid #c8c6c4;
  font-size: 15px;
  line-height: 24px;
}
.status .keys {
  margin-left: auto;
}

/* taskbar */
.taskbar {
  display: flex;
  align-items: center;
  height: 50px;
  background: linear-gradient(90deg, #dccfd2, #e0d2d6 40%, #dcd3d9 58%, #d3d5e1 66%, #d1d4e0);
}
.start {
  display: grid;
  place-items: center;
  width: 60px;
}
.tasksearch {
  display: flex;
  align-items: center;
  gap: 14px;
  width: 430px;
  height: 50px;
  padding: 0 15px;
  border: 1px solid #c8c8c8;
  background: #fff;
  color: #222;
}
.tasksearch input {
  flex: 1;
  min-width: 0;
  padding: 0;
  border: 0;
  font: 20px/30px var(--ko);
}
.add > input::placeholder {
  color: #666;
}
.tasksearch input::placeholder {
  color: #333;
}
.app-btn {
  position: relative;
  display: grid;
  place-items: center;
  width: 62px;
  height: 50px;
}
.explorer::after {
  content: "";
  position: absolute;
  inset: auto 6px 0;
  height: 3px;
  background: #0078d7;
}
.app-btn.access {
  background: #f0edf1;
  border-bottom: 3px solid #0078d7;
  padding-top: 3px;
}
.letter {
  position: absolute;
  left: 19px;
  top: 15px;
  font-size: 14px;
  font-weight: 700;
  color: #fff;
}
.tray {
  display: flex;
  align-items: center;
  margin-left: auto;
  padding-right: 20px;
  color: #111;
}
.temp {
  margin: 0 16px 0 13px;
  font-size: 18px;
}
.ti {
  margin: 0 10px;
}
.ti.pen {
  margin-left: 14px;
}
.ime {
  width: 20px;
  height: 20px;
  margin: 0 18px 0 8px;
  border: 1px solid #111;
  background: #fff;
  font-size: 16px;
  line-height: 16px;
  text-align: center;
}
.tray time {
  width: 82px;
  font-size: 15px;
  line-height: 23px;
  text-align: center;
  white-space: nowrap;
}
.notes {
  position: relative;
  margin: 0 10px 0 20px;
}
.notes svg {
  display: block;
}
.notes b {
  position: absolute;
  left: 10px;
  top: 12px;
  width: 20px;
  height: 20px;
  border: 1px solid #777;
  border-radius: 50%;
  background: #d9d9de;
  font-size: 15px;
  line-height: 17px;
  text-align: center;
}

/* dialogs */
.dialog {
  position: absolute;
  z-index: 5;
  border: 1px solid #9a9a9a;
  background: #f0f0f0;
  color: #000;
  box-shadow: 0 6px 18px rgba(0, 0, 0, 0.3);
}
.dhead {
  display: flex;
  align-items: center;
  height: 37px;
  padding-left: 9px;
  background: #fff;
}
.dhead span {
  margin-right: auto;
  padding-bottom: 2px;
}
.dhead button {
  display: grid;
  place-items: center;
  width: 57px;
  height: 37px;
}
.edit {
  left: 693px;
  top: 209px;
  width: 533px;
  height: 384px;
}
.edit .dhead {
  color: #999;
  font-family: var(--ko);
}
.edit .dhead button:last-child {
  margin-right: 2px;
}
.dbody {
  display: flex;
  gap: 9px;
  height: 342px;
  padding: 19px 5px 0 14px;
  overflow: hidden;
}
.form {
  width: 365px;
}
.pair {
  display: flex;
}
.labels {
  gap: 60px;
  height: 21px;
  white-space: nowrap;
}
.labels label:first-child {
  width: 112px;
}
.labels label {
  margin-top: -5px;
}
.labels .second {
  margin-top: -7px;
}
.combo2 {
  position: relative;
  width: 173px;
  height: 28px;
}
.combo2.wide {
  width: 192px;
}
.combo2 select {
  width: 100%;
  height: 28px;
  padding: 0 3px 2px;
  border: 1px solid #bfbfbf;
  border-radius: 0;
  background: #ccc;
  color: #777;
  opacity: 1;
  appearance: none;
}
.combo2 svg {
  position: absolute;
  right: 5px;
  top: 11px;
  color: #999;
}
.fields {
  display: flex;
  height: 100px;
  margin-top: 12px;
  overflow: hidden;
  border: 1px solid #646464;
  background: #fff;
}
.fields table {
  width: 342px;
  height: 104px;
  border-collapse: collapse;
  table-layout: fixed;
}
.fields td {
  width: 50%;
  height: 26px;
  padding: 0 0 0 4px;
  border-right: 1px solid #c0c0c0;
  border-bottom: 1px solid #c0c0c0;
  font-size: 19px;
  line-height: 24px;
}
.cell {
  display: flex;
  justify-content: space-between;
  height: 24px;
}
.cell button {
  display: grid;
  place-items: center;
  width: 21px;
  border: 1px solid #adadad;
  background: #e1e1e1;
}
.sbar {
  display: flex;
  flex: 1;
  flex-direction: column;
  align-items: center;
  padding: 7px 0;
  background: #f0f0f0;
  color: #555;
}
.sbar span {
  width: 19px;
  height: 21px;
  margin: 7px 0 auto;
  background: #cdcdcd;
}
.opts {
  height: 120px;
  margin-top: 8px;
  padding: 6px 10px;
  border: 1px solid #dcdcdc;
}
.opts label {
  display: flex;
  align-items: center;
  gap: 4px;
}
.opts input {
  position: relative;
  width: 16px;
  height: 16px;
  margin: 0;
  border: 1px solid #333;
  background: #fff;
  appearance: none;
}
.opts input:checked::after {
  content: "";
  position: absolute;
  left: 4px;
  top: 1px;
  width: 5px;
  height: 9px;
  border: solid #333;
  border-width: 0 1px 1px 0;
  transform: rotate(40deg);
}
.btns {
  display: flex;
  flex: 1;
  flex-direction: column;
  gap: 9px;
}
.btns button,
.mbtns button {
  height: 33px;
  padding-bottom: 2px;
  border: 1px solid #adadad;
  background: #e1e1e1;
  white-space: nowrap;
}
.msg {
  left: 699px;
  top: 470px;
  width: 542px;
  height: 159px;
  border-color: #666;
}
.msg .dhead button {
  width: 42px;
}
.warn {
  display: flex;
  align-items: center;
  gap: 16px;
  padding: 20px 0 13px 16px;
  font-family: var(--ko);
  white-space: nowrap;
}
.mbtns {
  display: flex;
  gap: 18px;
  padding-left: 134px;
}
.mbtns button {
  width: 126px;
}
.mbtns .def {
  border-color: #0078d7;
  background: #e5f1fb;
}
</style>
